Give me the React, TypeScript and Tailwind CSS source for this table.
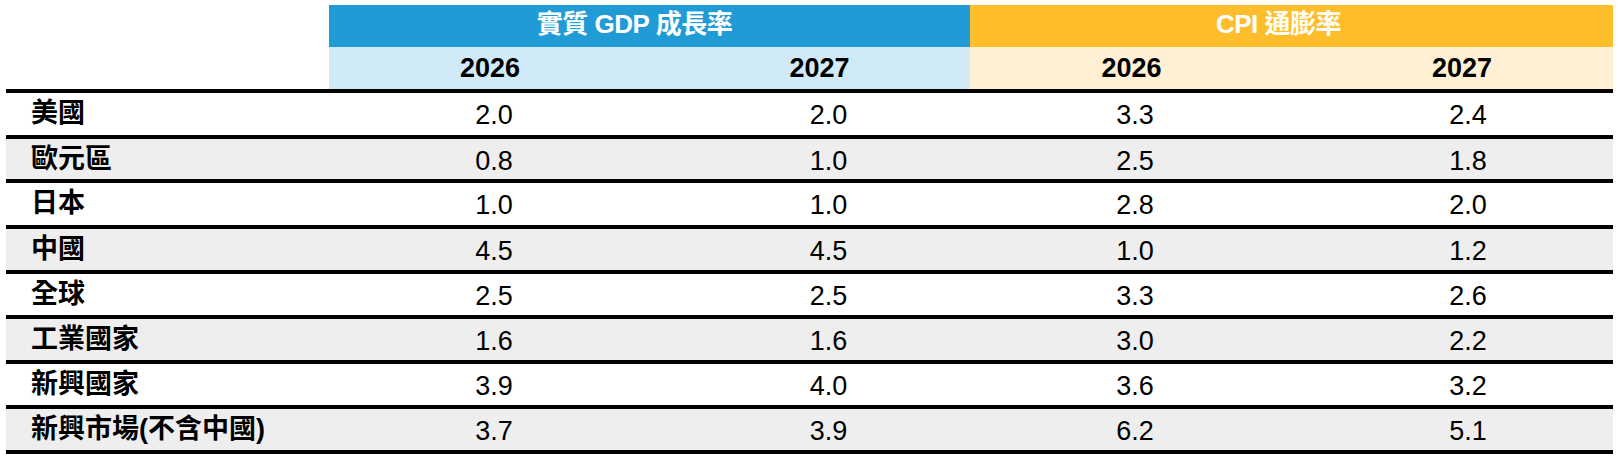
import React from "react";

type Row = { label: string; v: [string, string, string, string]; h: string; gray: boolean };

const rows: Row[] = [
  { label: "美國", v: ["2.0", "2.0", "3.3", "2.4"], h: "h-[42px]", gray: false },
  { label: "歐元區", v: ["0.8", "1.0", "2.5", "1.8"], h: "h-[40px]", gray: true },
  { label: "日本", v: ["1.0", "1.0", "2.8", "2.0"], h: "h-[42px]", gray: false },
  { label: "中國", v: ["4.5", "4.5", "1.0", "1.2"], h: "h-[41px]", gray: true },
  { label: "全球", v: ["2.5", "2.5", "3.3", "2.6"], h: "h-[41px]", gray: false },
  { label: "工業國家", v: ["1.6", "1.6", "3.0", "2.2"], h: "h-[41px]", gray: true },
  { label: "新興國家", v: ["3.9", "4.0", "3.6", "3.2"], h: "h-[41px]", gray: false },
  { label: "新興市場(不含中國)", v: ["3.7", "3.9", "6.2", "5.1"], h: "h-[41px]", gray: true },
];

const font = { fontFamily: '"Liberation Sans", "Noto Sans CJK TC", Arial, sans-serif' };
const numPad = ["pl-[10px]", "pl-[38px]", "pl-[9px]", "pl-[32px]"];
const yearPad = ["pl-[2px]", "pl-[20px]", "pl-[2px]", "pl-[20px]"];

export default function App() {
  return (
    <div className="bg-white w-[1620px] h-[462px] pt-[5px] pl-[6px]" style={font}>
      <div className="w-[1607px]">
        <div className="grid grid-cols-[323px_320px_321px_321px_322px] h-[42px]">
          <div />
          <div className="col-span-2 bg-[#219bd6] flex items-center justify-center pr-[30px] pb-[4px] text-white font-bold text-[26px] tracking-[-0.5px]">
            實質 GDP 成長率
          </div>
          <div className="col-span-2 bg-[#febd2b] flex items-center justify-center pr-[26px] pb-[4px] text-white font-bold text-[26px] tracking-[-0.5px]">
            CPI 通膨率
          </div>
        </div>
        <div className="grid grid-cols-[323px_320px_321px_321px_322px] h-[42px]">
          <div />
          {["2026", "2027"].map((y, i) => (
            <div key={"g" + y} className={`bg-[#d0ebf7] flex items-center justify-center font-bold text-[27px] text-black ${yearPad[i]}`}>
              {y}
            </div>
          ))}
          {["2026", "2027"].map((y, i) => (
            <div key={"c" + y} className={`bg-[#fff0d5] flex items-center justify-center font-bold text-[27px] text-black ${yearPad[i + 2]}`}>
              {y}
            </div>
          ))}
        </div>
        {rows.map((r, idx) => (
          <div
            key={r.label}
            className={`grid grid-cols-[323px_320px_321px_321px_322px] border-t-4 border-black ${r.h} ${r.gray ? "bg-[#eeeeee]" : "bg-white"} ${idx === rows.length - 1 ? "border-b-4 box-content" : "box-content"}`}
          >
            <div className="flex items-center pl-[25px] pb-[3px] font-bold text-[27px] text-black whitespace-nowrap">
              {r.label}
            </div>
            {r.v.map((n, i) => (
              <div key={i} className={`flex items-center justify-center text-[27px] text-black ${numPad[i]}`}>
                {n}
              </div>
            ))}
          </div>
        ))}
      </div>
    </div>
  );
}
